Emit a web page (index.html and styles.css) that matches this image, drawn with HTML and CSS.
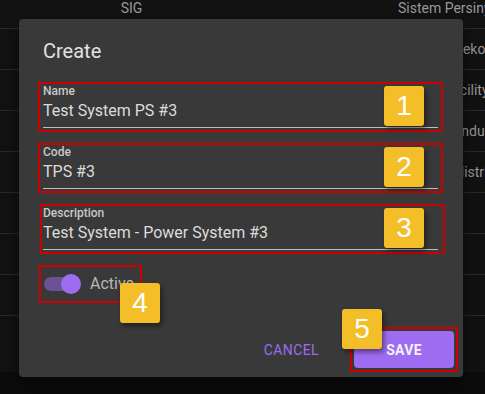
FILE: index.html
```html
<!DOCTYPE html>
<html lang="en">
<head>
    <meta charset="UTF-8">
    <meta name="viewport" content="width=device-width, initial-scale=1.0">
    <title>Create System</title>
    <link rel="stylesheet" href="styles.css">
</head>
<body>
    <div class="table">
        <div class="row head">
            <div class="cell sig">SIG</div>
            <div class="cell name">Sistem Persinyalan</div>
        </div>
        <div class="row"><div class="cell sig"></div><div class="cell name">Sistem Telekomunikasi</div></div>
        <div class="row"><div class="cell sig"></div><div class="cell name">Sistem Facility</div></div>
        <div class="row"><div class="cell sig"></div><div class="cell name">Sistem Konduktor</div></div>
        <div class="row"><div class="cell sig"></div><div class="cell name">Sistem Kelistrikan</div></div>
        <div class="row"><div class="cell sig"></div><div class="cell name"></div></div>
        <div class="row"><div class="cell sig"></div><div class="cell name"></div></div>
        <div class="row"><div class="cell sig"></div><div class="cell name"></div></div>
        <div class="row last"></div>
    </div>

    <div class="dialog">
        <div class="dialog-title">Create</div>
        <div class="dialog-body">
            <div class="field mark">
                <label>Name</label>
                <div class="value">Test System PS #3</div>
            </div>
            <div class="field mark">
                <label>Code</label>
                <div class="value">TPS #3</div>
            </div>
            <div class="field mark shifted">
                <label>Description</label>
                <div class="value">Test System - Power System #3</div>
            </div>
            <div class="switch mark">
                <span class="track"><span class="thumb"></span></span>
                <span class="switch-label">Active</span>
            </div>
        </div>
        <div class="dialog-actions">
            <button class="btn-text">Cancel</button>
            <div class="mark save-mark"><button class="btn-save">Save</button></div>
        </div>
    </div>

    <div class="badge b1">1</div>
    <div class="badge b2">2</div>
    <div class="badge b3">3</div>
    <div class="badge b4">4</div>
    <div class="badge b5">5</div>
</body>
</html>
```
FILE: styles.css
```css
body {
    margin: 0;
    width: 485px;
    height: 394px;
    overflow: hidden;
    background: #0c0c0c;
    font-family: Roboto, "Liberation Sans", sans-serif;
    position: relative;
}
.table {
    background: #121212;
    color: #9a9a9a;
    font-size: 14px;
}
.row {
    display: grid;
    grid-template-columns: 398px 1fr;
    height: 40px;
    border-bottom: 1px solid #2a2a2a;
    align-items: center;
    white-space: nowrap;
    overflow: hidden;
}
.row.head { height: 28px; align-items: start; }
.row.head .cell { line-height: 16px; padding-top: 0; }
.row.last { height: 56px; border-bottom: none; }
.cell.sig { text-align: center; padding-right: 135px; }
.cell.name { overflow: hidden; }

.dialog {
    position: absolute;
    left: 19px;
    top: 19px;
    width: 444px;
    height: 358px;
    background: #393939;
    border-radius: 4px;
    box-shadow: 0 8px 20px rgba(0, 0, 0, 0.5);
    display: flex;
    flex-direction: column;
}
.dialog-title {
    padding: 16px 24px 0;
    font-size: 20px;
    line-height: 32px;
    color: #e2e2e2;
}
.dialog-body {
    padding: 15px 20px 0 19px;
    display: flex;
    flex-direction: column;
    gap: 11px;
}
.mark { border: 2px solid #cc0000; }
.field {
    padding: 0 3px 2px 3px;
}
.field.shifted { margin-left: 2px; margin-right: -2px; padding-left: 1px; padding-right: 5px; }
.field label {
    display: block;
    font-size: 12px;
    line-height: 14px;
    font-weight: 500;
    color: #c8c8c8;
}
.field .value {
    margin-top: 1px;
    font-size: 16px;
    line-height: 24px;
    color: #dcdcdc;
    padding-bottom: 4px;
    border-bottom: 1px solid #bdbdbd;
}
.switch {
    align-self: flex-start;
    width: 96px;
    height: 34px;
    margin-left: 1px;
    display: flex;
    align-items: center;
    gap: 10px;
    padding-left: 3px;
    box-sizing: content-box;
}
.track {
    position: relative;
    width: 36px;
    height: 14px;
    border-radius: 7px;
    background: #6a5294;
}
.thumb {
    position: absolute;
    right: -1px;
    top: -3px;
    width: 20px;
    height: 20px;
    border-radius: 50%;
    background: #9d6cf1;
}
.switch-label {
    font-size: 16px;
    color: #b8b8b8;
    line-height: 20px;
}
.dialog-actions {
    margin-top: auto;
    display: flex;
    justify-content: flex-end;
    align-items: center;
    gap: 31px;
    padding: 0 5px 5px 0;
}
.btn-text, .btn-save {
    font-family: Roboto, "Liberation Sans", sans-serif;
    font-size: 14px;
    font-weight: 500;
    letter-spacing: 0.3px;
    text-transform: uppercase;
    border: none;
    cursor: pointer;
}
.btn-text {
    background: none;
    color: #9a6cf0;
    padding: 0;
    font-weight: 400;
    letter-spacing: 0.4px;
}
.save-mark { padding: 2px; display: flex; }
.btn-save {
    width: 100px;
    height: 37px;
    border-radius: 4px;
    background: #9d6cf1;
    color: #f4f0fb;
    font-weight: 700;
}
.badge {
    position: absolute;
    width: 40px;
    height: 40px;
    background: #f4be28;
    border-radius: 3px;
    color: #fff;
    font-family: "Liberation Sans", Arial, sans-serif;
    font-size: 28px;
    line-height: 40px;
    text-align: center;
    box-shadow: 2px 3px 5px rgba(0, 0, 0, 0.45);
}
.b1 { left: 384px; top: 86px; }
.b2 { left: 384px; top: 147px; }
.b3 { left: 384px; top: 208px; }
.b4 { left: 120px; top: 283px; }
.b5 { left: 342px; top: 309px; }
```
